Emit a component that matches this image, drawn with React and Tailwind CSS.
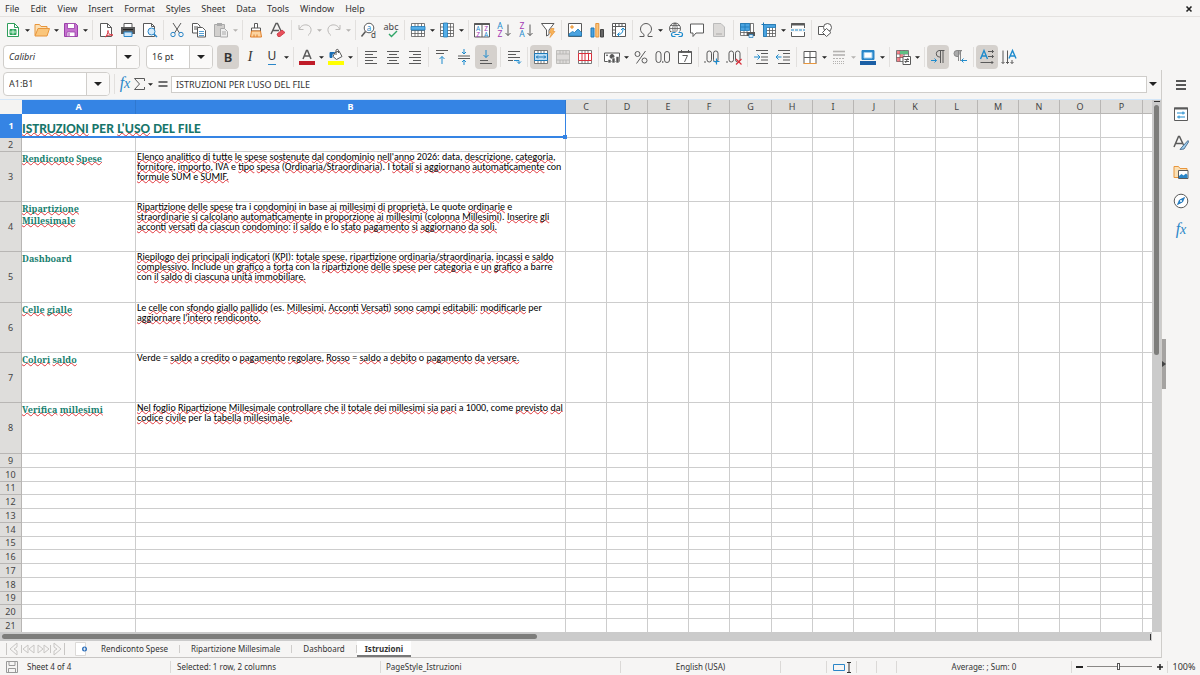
import clsx from "clsx";

const icons = {
  newDoc: (
    <>
      <path d="M2.5 1.5h7l4 4v9h-11z" stroke="#2f9e5b" fill="#fff" />
      <path d="M9.5 1.5v4h4" stroke="#2f9e5b" />
      <path d="M5 7.5h6v5H5z" fill="#43b96f" stroke="#2f9e5b" />
      <path d="M5 10h6M8 7.5v5" stroke="#fff" strokeWidth=".7" />
    </>
  ),
  open: (
    <>
      <path d="M1 13.5v-11h4.5l1.5 2h6v2" fill="#fbe0b5" stroke="#e8963c" />
      <path d="M1 14l3-7.5h11.5L13 14z" fill="#fac67c" stroke="#e8963c" />
    </>
  ),
  save: (
    <>
      <path d="M1.5 1.5h11l2 2v11h-13z" fill="#c572cf" stroke="#9a3fa8" />
      <path d="M4.5 1.5h7v5h-7z" fill="#fff" stroke="#9a3fa8" strokeWidth=".8" />
      <path d="M4 14.5V10h8v4.5z" fill="#fff" stroke="#9a3fa8" strokeWidth=".8" />
      <path d="M6 11v3" stroke="#9a3fa8" />
    </>
  ),
  pdf: (
    <>
      <path d="M2.5 1.5h7l4 4v9h-11z" fill="#fff" />
      <path d="M9.5 1.5v4h4" />
      <path d="M7 15c2-1.500 3-4 3-6.500 0 3 2 5 5 4.500-3-.5-6 .5-8 2z" stroke="#d9303c" fill="#fff" />
    </>
  ),
  print: (
    <>
      <path d="M4 5V1.500h8V5" fill="#fff" />
      <path d="M1 5h14v7H1z" fill="#5a5a5a" stroke="none" />
      <path d="M3 7.500h10" stroke="#222" />
      <path d="M4 10h8v4.500H4z" fill="#cfe6f8" stroke="#2a86c8" />
    </>
  ),
  preview: (
    <>
      <path d="M1.500 1.500h8l3 3v10h-11z" fill="#fff" />
      <path d="M9.500 1.500v3h3" />
      <circle cx="9.500" cy="9.500" r="3.500" fill="#d6ebfa" stroke="#2a86c8" />
      <path d="M12 12l3 3" stroke="#2a86c8" strokeWidth="1.500" />
    </>
  ),
  cut: (
    <>
      <path d="M4 1l6.500 10M12 1L5.500 11" />
      <circle cx="4" cy="12.500" r="2.200" stroke="#2a86c8" />
      <circle cx="12" cy="12.500" r="2.200" stroke="#2a86c8" />
    </>
  ),
  copy: (
    <>
      <path d="M1.500 1.500h5l2.500 2.500v7h-7.500zM3 5h4M3 7h4" fill="#fff" />
      <path d="M6.500 5.500h5l3 3v6.500h-8z" fill="#fff" />
      <path d="M8 9.500h5M8 11.500h5M8 13.500h5" stroke="#2a86c8" strokeWidth=".8" />
    </>
  ),
  paste: (
    <>
      <path d="M1.500 2.500h10v12h-10z" fill="#d2d0ce" stroke="#aaa" />
      <path d="M4 1h5v3H4z" fill="#aaa" stroke="none" />
      <path d="M7.500 6.500h4l3 3v5.500h-7zM9 10h4M9 12h4" fill="#eee" stroke="#aaa" />
    </>
  ),
  clone: (
    <>
      <path d="M6.500 6V1.500h3V6" fill="#fff" />
      <path d="M3.500 6h9v3h-9z" fill="#fff" />
      <path d="M3.500 9h9l1 6h-11z" fill="#fbd3a0" stroke="#e07e28" />
      <path d="M6 12.500V15M9 12.500V15" stroke="#e07e28" />
    </>
  ),
  clear: (
    <>
      <path d="M1 12L6 1.500h1.500L11 9M3 8.500h6" strokeWidth="1.400" />
      <path d="M7 12l5-4 3 2.500-5 4H8z" fill="#e8505b" stroke="#c9303c" strokeWidth=".8" />
    </>
  ),
  undo: <path d="M2 3v4.500h4.500M2.500 7C4 3.500 7 2.500 10 3c5 1 5.500 7 1 10.500" stroke="#bcbab8" />,
  redo: <path d="M14 3v4.500H9.500M13.500 7C12 3.500 9 2.500 6 3c-5 1-5.500 7-1 10.500" stroke="#bcbab8" />,
  find: (
    <>
      <circle cx="8" cy="6" r="4.800" fill="#fff" />
      <path d="M4.500 9.500L.5 14.500" strokeWidth="1.500" />
      <text x="8" y="8.500" fontSize="8" textAnchor="middle" fill="#1e8bcd" stroke="none">a</text>
      <text x="12.500" y="15.500" fontSize="8" textAnchor="middle" fill="#444" stroke="none">d</text>
    </>
  ),
  spell: (
    <>
      <text x="8" y="7.500" fontSize="9" textAnchor="middle" fill="#444" stroke="none">abc</text>
      <path d="M6 12l2.500 2.500L14 9" stroke="#2fa567" strokeWidth="1.400" />
    </>
  ),
  row: (
    <>
      <path d="M1.500 1.500h13v13h-13zM1.500 11.500h13M1.500 8.500h13M5 1.500v13M8 1.500v13M11.500 1.500v13" fill="#fff" strokeWidth=".8" />
      <path d="M1 4.500h14v3.500H1z" fill="#55aee8" stroke="#1c79b8" strokeWidth=".8" />
    </>
  ),
  column: (
    <>
      <path d="M1.500 1.500h13v13h-13zM1.500 11.500h13M1.500 8.500h13M1.500 5h13M5 1.500v13M11.500 1.500v13" fill="#fff" strokeWidth=".8" />
      <path d="M4.500 1h4v14h-4z" fill="#55aee8" stroke="#1c79b8" strokeWidth=".8" />
    </>
  ),
  sort: (
    <>
      <path d="M.500 1.500h15v13.500H.500zM8 1.500V15" fill="#fff" />
      <path d="M.500 2h15" strokeWidth="2" />
      <g stroke="none" fontSize="6.500" textAnchor="middle">
        <text x="4.200" y="8.700" fill="#1e8bcd">A</text>
        <text x="4.200" y="14.500" fill="#a33bb5">Z</text>
        <text x="12" y="8.700" fill="#a33bb5">Z</text>
        <text x="12" y="14.500" fill="#1e8bcd">A</text>
      </g>
    </>
  ),
  asc: (
    <>
      <g stroke="none" fontSize="8.500" textAnchor="middle">
        <text x="4" y="7" fill="#1e8bcd">A</text>
        <text x="4" y="15" fill="#a33bb5">Z</text>
      </g>
      <path d="M12 2.500v11M9.500 11l2.500 2.500 2.500-2.500" />
    </>
  ),
  desc: (
    <>
      <g stroke="none" fontSize="8.500" textAnchor="middle">
        <text x="4" y="7" fill="#a33bb5">Z</text>
        <text x="4" y="15" fill="#1e8bcd">A</text>
      </g>
      <path d="M12 2.500v11M9.500 11l2.500 2.500 2.500-2.500" />
    </>
  ),
  filter: (
    <>
      <path d="M1.500 1.500h12.500l-5 6.500v4.500l-2.500 1.500V8z" fill="#fff" />
      <path d="M11 6.500h3l-1 3h2l-5 6 1.500-4.500H9.500z" fill="#f9b559" stroke="#e8963c" strokeWidth=".7" />
    </>
  ),
  image: (
    <>
      <path d="M1.500 1.500h13v13h-13z" fill="#fff" />
      <circle cx="5" cy="5" r="1.300" fill="#f9b559" stroke="#e8963c" strokeWidth=".8" />
      <path d="M2 14v-2l3.500-2.500 2 1L11 7l3.500 3.500V14z" fill="#4aa3e0" stroke="#1c79b8" strokeWidth=".8" />
    </>
  ),
  chart: (
    <>
      <path d="M2 6h3v9H2z" fill="#4aa3e0" stroke="#1c79b8" />
      <path d="M6.800 1.500h3V15h-3z" fill="#fbc47a" stroke="#e8963c" />
      <path d="M11.500 7.500h3V15h-3z" fill="#666" stroke="#444" />
    </>
  ),
  pivot: (
    <>
      <path d="M1.500 1.500h13v13h-13zM1.500 4.500h13M4.500 1.500v13M8 1.500v3M11 1.500v3M1.500 8h3M1.500 11h3" fill="#fff" />
      <path d="M6.500 12.500c4 0 5.500-2 5.500-6M10 8l2-2 2 2M8.500 10.500l-2 2 2 2" stroke="#1e8bcd" />
    </>
  ),
  omega: <path d="M1.500 14.500H6v-2C3.500 11 2.500 9 2.500 7a5.500 5.500 0 0 1 11 0c0 2-1 4-3.500 5.500v2h4.500" />,
  link: (
    <>
      <circle cx="8" cy="6.500" r="5.500" fill="#fff" />
      <path d="M2.500 6.500h11M8 1v10M3.500 3.500h9M3.500 9.500h6M8 1c-3 3-3 8 0 11M8 1c3 3 3 8 0 11" strokeWidth=".8" />
      <path d="M4 9.500h12v6H4z" fill="#f6f5f4" stroke="none" />
      <path d="M8.500 10.500h-2a2 2 0 0 0 0 4h2M11.500 10.500h2a2 2 0 0 1 0 4h-2M7.500 12.500h5" stroke="#1e8bcd" strokeWidth="1.200" />
    </>
  ),
  comment: <path d="M1.500 2h13v9H7l-3 3.500V11H1.500z" fill="#fff" />,
  header: (
    <>
      <path d="M2.500 1.500h7.500l3.500 3.500v9.500h-11z" fill="#dcdad8" stroke="#bbb" />
      <path d="M5 11h6v2H5z" fill="#c4c2c0" stroke="none" />
    </>
  ),
  printArea: (
    <>
      <path d="M1.500 1.500h13v12h-13zM1.500 10.500h13M11.500 1.500v12M5 9v4.500M8 9v4.500" fill="#fff" strokeWidth=".8" />
      <path d="M1.500 1.500h9v7h-9zM1.500 5h9M6 1.500v7" fill="#4aa3e0" stroke="#1c79b8" strokeWidth=".8" />
      <path d="M8 10h8v4H8z" fill="#555" stroke="none" />
      <path d="M10 12.500h4v3h-4z" fill="#d6ebfa" stroke="#1c79b8" strokeWidth=".7" />
    </>
  ),
  freeze: (
    <>
      <path d="M2.500 2.500h12v12h-12zM5.500 8.500h9M5.500 11.500h9M8.500 5.500v9M11.500 5.500v9" fill="#fff" strokeWidth=".8" />
      <path d="M2.500 2.500h12v3h-9v9h-3z" fill="#4aa3e0" stroke="#1c79b8" strokeWidth=".8" />
      <path d="M2.500.5v4M.5 2.500h4" stroke="#1c79b8" />
    </>
  ),
  split: (
    <>
      <path d="M1.500 6V1.500h13V6M1.500 10v4.500h13V10" fill="#fff" />
      <path d="M1 2.500h14" strokeWidth="2" />
      <path d="M1 8h14" stroke="#1e8bcd" strokeDasharray="3 1" />
    </>
  ),
  shapes: (
    <>
      <path d="M1.500 4.500h8v8h-8z" fill="#fff" />
      <circle cx="10.500" cy="5.500" r="4" fill="#fff" />
      <path d="M9.500 6.500l4.500 4-4.500 4-4-4z" fill="#fff" />
    </>
  ),
  fontColor: (
    <>
      <path d="M4 10L7.500 1.500h1L12 10M5.200 7h5.600" strokeWidth="1.500" />
      <path d="M0 12h16v4H0z" fill="#c01c28" stroke="none" />
    </>
  ),
  fill: (
    <>
      <path d="M7 3.500l4-1.500 3 5.500-5.500 3L5 7.500z" fill="#fff" />
      <path d="M8 6V1.500c0-1.500 2.500-1.500 2.500 0V4" />
      <path d="M2 8.500V3.500h4.500L4 5.500v3z" stroke="#1c6fb5" fill="#1c6fb5" />
      <path d="M0 12h16v4H0z" fill="#ffff00" stroke="none" />
    </>
  ),
  left: <path d="M2 2.500h12M2 5.500h8M2 8.500h12M2 11.500h8M2 14.500h12" />,
  center: <path d="M2 2.500h12M4 5.500h8M2 8.500h12M4 11.500h8M2 14.500h12" />,
  right: <path d="M2 2.500h12M6 5.500h8M2 8.500h12M6 11.500h8M2 14.500h12" />,
  top: (
    <>
      <path d="M2 1.500h12M2 4.500h8" />
      <path d="M8 15V7.500M5.500 10L8 7.500l2.500 2.500" stroke="#1e8bcd" />
    </>
  ),
  middle: (
    <>
      <path d="M2 7h12M2 9.500h12" />
      <path d="M8 0v5M6 3l2 2 2-2M8 16v-5M6 13l2-2 2 2" stroke="#1e8bcd" />
    </>
  ),
  bottom: (
    <>
      <path d="M2 11.500h8M2 14.500h12" />
      <path d="M8 1v7.500M5.500 6L8 8.500 10.500 6" stroke="#1e8bcd" />
    </>
  ),
  wrap: (
    <>
      <path d="M2 2.500h12M2 5.500h8M2 8.500h12M2 11.500h5" />
      <path d="M8 11.500h5v3M11 12.500l2 2 2-2" stroke="#1e8bcd" />
    </>
  ),
  merge: (
    <>
      <path d="M1.500 1.500h13v13h-13zM1.500 4.500h13M1.500 11.500h13M5 1.500v3M8 1.500v3M11 1.500v3M5 11.500v3M8 11.500v3M11 11.500v3" fill="#fff" strokeWidth=".8" />
      <path d="M1.500 4.500h13v7h-13z" fill="#b9dcf5" stroke="#1c79b8" />
      <path d="M3 8h10M5 6.500L3.500 8 5 9.500M11 6.500L12.500 8 11 9.500" stroke="#1c79b8" />
    </>
  ),
  mergeOff: (
    <path d="M1.500 1.500h13v13h-13zM1.500 5h13M1.500 11h13M5 1.500V5M8 1.500V5M11 1.500V5M5 11v3.500M8 11v3.500M11 11v3.500" fill="#dddbd9" stroke="#b4b2b0" strokeWidth=".8" />
  ),
  unmerge: (
    <>
      <path d="M1.500 1.500h13v13h-13zM5 1.500v3M8 1.500v3M11 1.500v3M5 11.500v3M8 11.500v3M11 11.500v3" fill="#fff" strokeWidth=".8" />
      <path d="M1.500 4.500h13v7h-13zM5 4.500v7M8 4.500v7M11.500 4.500v7" fill="#fff" stroke="#d9303c" />
    </>
  ),
  currency: (
    <>
      <path d="M.500 4h15v8.500H.500z" fill="#fff" />
      <circle cx="8" cy="7.500" r="2" fill="#555" />
      <circle cx="3" cy="6.300" r=".5" fill="#555" />
      <path d="M4 12.500v-2h3v3.500H4zM8 14V9h3v5zM12 14V7.500h3V14z" fill="#555" stroke="#fff" strokeWidth=".6" />
    </>
  ),
  percent: (
    <>
      <circle cx="4.500" cy="5" r="2.500" />
      <circle cx="11.500" cy="11.500" r="2.500" />
      <path d="M12.500 2L3.500 14.500" />
    </>
  ),
  number: (
    <>
      <rect x="1" y="2.500" width="5" height="11" rx="2.500" />
      <rect x="9.500" y="2.500" width="5" height="11" rx="2.500" />
      <path d="M7.800 12v2" />
    </>
  ),
  date: (
    <>
      <path d="M1.500 2.500h13v12h-13zM4.500 1v3M11.500 1v3" fill="#fff" />
      <path d="M1.500 3h13" strokeWidth="1.800" />
      <path d="M5.500 6.500h5L7.500 13" />
    </>
  ),
  addDec: (
    <>
      <rect x="3" y="2" width="4.500" height="11" rx="2.200" />
      <rect x="9.500" y="2" width="4.500" height="11" rx="2.200" />
      <path d="M1 12v2" />
      <path d="M12.500 9.500v6M9.500 12.500h6" stroke="#1e8bcd" strokeWidth="1.200" />
    </>
  ),
  delDec: (
    <>
      <rect x="3" y="2" width="4.500" height="11" rx="2.200" />
      <rect x="9.500" y="2" width="4.500" height="11" rx="2.200" />
      <path d="M1 12v2" />
      <path d="M10 10l5.500 5.500M15.500 10L10 15.500" stroke="#d9303c" strokeWidth="1.200" />
    </>
  ),
  indent: (
    <>
      <path d="M3 1.500h12M8 4.500h7M8 8h7M8 11h7M3 14.500h12" />
      <path d="M1 8h5.500M4.500 5.500L7 8l-2.500 2.500" stroke="#1e8bcd" />
    </>
  ),
  outdent: (
    <>
      <path d="M3 1.500h12M8 4.500h7M8 8h7M8 11h7M3 14.500h12" />
      <path d="M6.500 8H1M3.500 5.500L1 8l2.500 2.500" stroke="#1e8bcd" />
    </>
  ),
  border: (
    <>
      <path d="M2 14.500v-12h12v12M8 2.500v12M2 8.500h12" fill="#fff" />
      <path d="M1.500 14.500h13" stroke="#e8963c" />
    </>
  ),
  lineStyle: (
    <>
      <path d="M2 2.500h12" stroke="#b4b2b0" strokeWidth="1.600" />
      <path d="M2 6h12" stroke="#b4b2b0" strokeWidth="1.600" />
      <path d="M2 9.500h12" stroke="#b4b2b0" strokeDasharray="2 1" />
      <path d="M2 12.500h12M2 14.500h12" stroke="#b4b2b0" strokeDasharray="1 1" />
    </>
  ),
  lineColor: (
    <>
      <path d="M2 1.500h12v9H2z" fill="#2a86c8" stroke="#2a86c8" />
      <path d="M4 3.500h8v5.500H4z" fill="#fff" stroke="#9ccdef" />
      <path d="M0 12h16v4H0z" fill="#1b5fa5" stroke="none" />
    </>
  ),
  conditional: (
    <>
      <path d="M1.500 1.500h12v11h-12zM1.500 5h12M1.500 8.500h12M5 1.500v11M9 1.500v11" fill="#fff" strokeWidth=".8" />
      <path d="M2 2h3v3H2zM5 5.500h3v3H5zM2 8.500h3v4H2z" fill="#e8505b" fillOpacity=".7" stroke="none" />
      <path d="M5 2h8v3H5z" fill="#5fbf83" stroke="none" />
      <path d="M8 7.500h7.500v8H8z" fill="#fff" />
      <path d="M9.500 10.500h4.500M9.500 12.500h4.500M13 9l-2.500 5" />
    </>
  ),
  ltr: (
    <>
      <path d="M14.500 1.500H9a3.300 3.300 0 0 0 0 6.500h1.500M10.500 1.500V14M13 1.500V14" />
      <path d="M1 11.500h5.500M4.500 9.500l2 2-2 2" stroke="#1e8bcd" />
    </>
  ),
  rtl: (
    <>
      <path d="M10 1.500H5a3 3 0 0 0 0 6h1.500M6.500 1.500V12M8.500 1.500V12" fill="#aaa" stroke="#888" />
      <path d="M15 11.500H9.500M11.500 9.500l-2 2 2 2" stroke="#1e8bcd" />
    </>
  ),
  textLtr: (
    <>
      <path d="M1.500 10L5 1.500 8.500 10M2.700 7h4.600" stroke="#1e8bcd" strokeWidth="1.400" />
      <path d="M9 2.500h5.500M9 7.500h5.500M1.500 13.500H14M13 1l1.500 1.500L13 4M13 6l1.500 1.500L13 9M12.500 12l1.500 1.500-1.500 1.500" />
    </>
  ),
  textTtb: (
    <>
      <path d="M8 9.500l3.500-8 3.500 8M9.200 7h4.600" stroke="#1e8bcd" strokeWidth="1.400" />
      <path d="M2 1.500v13M6.500 1.500v13M11 11v3.500M.5 13L2 14.500 3.500 13M5 13l1.500 1.500L8 13M9.500 13l1.500 1.500 1.500-1.500" />
    </>
  ),
  sigma: <path d="M13 4V1.500H3L8.500 8 3 14.500h10V12" />,
  equals: <path d="M3.500 6h9M3.500 10h9" stroke="#444" strokeWidth="1.400" />,
  menu: <path d="M3 4h10M3 8h10M3 12h10" stroke="#222" strokeWidth="1.500" />,
  properties: (
    <>
      <path d="M1.500 2h13v12.500h-13z" fill="#fff" />
      <path d="M1 2.500h14" strokeWidth="2" />
      <path d="M4 7h8M4 11h8M10 5.500v3M6 9.500v3" stroke="#1e8bcd" />
    </>
  ),
  styles: (
    <>
      <path d="M1 12L5.500 1.500h1L10.500 10M2.700 8.500H9" strokeWidth="1.500" />
      <path d="M15 5.500L9 12l-2 2.500 4-.5 4.500-7z" fill="#9ccdef" stroke="#44688a" strokeWidth=".9" />
    </>
  ),
  gallery: (
    <>
      <path d="M1 13.500v-11h4.500l1.500 2h7v9z" fill="#fbe0b5" stroke="#e8963c" />
      <path d="M5.500 6.500h9.500v8H5.500z" fill="#fff" />
      <path d="M6 14v-2l2.500-2 2 1.500L13 9.500l1.500 1.500v3z" fill="#2a86c8" stroke="none" />
    </>
  ),
  navigator: (
    <>
      <circle cx="8" cy="8" r="6.800" fill="#fff" />
      <path d="M11.500 4.500L9.500 9l-5 2.500 2-4.500z" fill="#2a86c8" stroke="#1c6fb5" strokeWidth=".8" />
      <circle cx="8" cy="8" r="1" fill="#fff" stroke="none" />
    </>
  ),
  docSaved: (
    <path d="M2.500 2.500h11v11h-11zM5 2.500v4h6v-4M4.500 13.500v-4h7v4" stroke="#999" />
  ),
};

function Icon({ name }) {
  return (
    <svg viewBox="0 0 16 16" fill="none" stroke="#5a5a5a" className="size-4 shrink-0 overflow-visible" aria-hidden="true">
      {icons[name]}
    </svg>
  );
}

function Caret({ dim, big }) {
  return (
    <svg viewBox="0 0 8 4" className={clsx("shrink-0", big ? "h-1 w-2" : "h-[3px] w-[5px]")} aria-hidden="true">
      <path d="M0 0h8L4 4z" fill={dim ? "#b5b3b1" : "#222"} />
    </svg>
  );
}

function Fx() {
  return (
    <span className="font-['Liberation_Serif',serif] text-base leading-4 text-[#2a86c8] italic">
      f<span className="text-sm">x</span>
    </span>
  );
}

const standardBar = [
  ["newDoc", "New", { menu: true }],
  ["open", "Open", { menu: true }],
  ["save", "Save", { menu: true }],
  "||",
  ["pdf", "Export as PDF"],
  ["print", "Print"],
  ["preview", "Print Preview"],
  "|",
  ["cut", "Cut"],
  ["copy", "Copy"],
  ["paste", "Paste", { menu: true, dim: true }],
  "||",
  ["clone", "Clone Formatting"],
  ["clear", "Clear Direct Formatting"],
  "|",
  ["undo", "Undo", { menu: true, dim: true }],
  ["redo", "Redo", { menu: true, dim: true }],
  "||",
  ["find", "Find and Replace"],
  ["spell", "Spelling"],
  "|",
  ["row", "Row", { menu: true }],
  ["column", "Column", { menu: true }],
  "||",
  ["sort", "Sort"],
  ["asc", "Sort Ascending"],
  ["desc", "Sort Descending"],
  ["filter", "AutoFilter"],
  "|",
  ["image", "Insert Image"],
  ["chart", "Insert Chart"],
  ["pivot", "Insert Pivot Table"],
  "|",
  ["omega", "Special Character", { menu: true }],
  ["link", "Insert Hyperlink"],
  ["comment", "Insert Comment"],
  ["header", "Headers and Footers"],
  "||",
  ["printArea", "Define Print Area"],
  ["freeze", "Freeze Rows and Columns", { menu: true }],
  ["split", "Split Window"],
  "|",
  ["shapes", "Show Draw Functions"],
];

const formattingBar = [
  "||",
  ["fontColor", "Font Color", { menu: true }],
  ["fill", "Background Color", { menu: true }],
  "||",
  ["left", "Align Left"],
  ["center", "Center Horizontally"],
  ["right", "Align Right"],
  "|",
  ["top", "Align Top"],
  ["middle", "Center Vertically"],
  ["bottom", "Align Bottom", { active: true }],
  "||",
  ["wrap", "Wrap Text"],
  "|",
  ["merge", "Merge and Center", { active: true }],
  ["mergeOff", "Merge Cells"],
  ["unmerge", "Unmerge Cells"],
  "|",
  ["currency", "Currency", { menu: true }],
  ["percent", "Percent"],
  ["number", "Number"],
  ["date", "Date"],
  "|",
  ["addDec", "Add Decimal Place"],
  ["delDec", "Delete Decimal Place"],
  "|",
  ["indent", "Increase Indent"],
  ["outdent", "Decrease Indent"],
  "|",
  ["border", "Borders", { menu: true }],
  ["lineStyle", "Border Style", { menu: true, dim: true }],
  ["lineColor", "Border Color", { menu: true }],
  "||",
  ["conditional", "Conditional", { menu: true }],
  "||",
  ["ltr", "Left-To-Right", { active: true }],
  ["rtl", "Right-To-Left"],
  "|",
  ["textLtr", "Text direction left to right", { active: true }],
  ["textTtb", "Text direction top to bottom"],
];

function ToolButton({ label, active, children }) {
  return (
    <button
      type="button"
      aria-label={label}
      className={clsx("flex h-6 w-[22px] shrink-0 items-center justify-center rounded", active && "bg-[#d5d1cd]")}
    >
      {children}
    </button>
  );
}

function MenuArrow({ label, dim }) {
  return (
    <button type="button" aria-label={label} className="flex h-6 w-[7px] shrink-0 items-center justify-center pt-px">
      <Caret dim={dim} />
    </button>
  );
}

function ToolItems({ items }) {
  return items.map((item, i) => {
    if (typeof item === "string") {
      return (
        <div key={i} className={clsx("flex h-5 shrink-0 justify-center", item === "||" ? "w-1.5" : "w-[5px]")}>
          <div className="w-px bg-[#e2e0de]" />
        </div>
      );
    }
    const [icon, label, opts = {}] = item;
    return (
      <div key={i} className="flex shrink-0">
        <ToolButton label={label} active={opts.active}>
          <Icon name={icon} />
        </ToolButton>
        {opts.menu && <MenuArrow label={`${label} options`} dim={opts.dim} />}
      </div>
    );
  });
}

function ComboBox({ label, value, className, inputClass }) {
  return (
    <div className={clsx("flex h-6 shrink-0 overflow-hidden rounded border border-[#d0cecb] bg-white", className)}>
      <input aria-label={label} defaultValue={value} className={clsx("min-w-0 flex-1 px-[5px] outline-none", inputClass)} />
      <button
        type="button"
        aria-label={`${label} list`}
        className="flex w-[23px] items-center justify-center border-l border-[#d0cecb] bg-[#faf9f8]"
      >
        <Caret big />
      </button>
    </div>
  );
}

const menus = ["File", "Edit", "View", "Insert", "Format", "Styles", "Sheet", "Data", "Tools", "Window", "Help"];

function MenuBar() {
  return (
    <nav className="flex h-[17px] shrink-0 items-center gap-[11px] border-b border-[#e4e2e0] pt-0.5 pr-1.5 pl-[5px]">
      {menus.map(m => (
        <button key={m} type="button">{m}</button>
      ))}
      <button type="button" aria-label="Close document" className="ml-auto">
        <svg viewBox="0 0 8 8" className="mr-px size-2" stroke="#222" strokeWidth="1.600">
          <path d="M1.500 1.500l5 5M6.500 1.500l-5 5" />
        </svg>
      </button>
    </nav>
  );
}

function FormulaBar() {
  return (
    <div className="flex h-[29px] shrink-0 items-center pr-1 pb-px pl-[3px]">
      <ComboBox label="Name Box" value="A1:B1" className="w-[107px]" />
      <div className="ml-1 h-5 w-px bg-[#e2e0de]" />
      <button type="button" aria-label="Function Wizard" className="ml-0.5 w-4"><Fx /></button>
      <button type="button" aria-label="Select Function" className="w-3.5">
        <svg viewBox="0 0 14 16" fill="none" stroke="#5a5a5a" className="h-4 w-3.5" aria-hidden="true">
          <path d="M11.500 5V2.500H1.500L6.500 8l-5 5.500h10V11" />
        </svg>
      </button>
      <MenuArrow label="Select Function options" />
      <button type="button" aria-label="Formula" className="ml-px"><Icon name="equals" /></button>
      <input
        aria-label="Input line"
        defaultValue="ISTRUZIONI PER L'USO DEL FILE"
        className="h-[17px] min-w-0 flex-1 border border-[#cfcdca] bg-white px-1 outline-none"
      />
      <button type="button" aria-label="Expand Formula Bar" className="pl-0.5"><Caret big /></button>
    </div>
  );
}

// words the English dictionary accepts
const known = new Set([
  "PER", "DEL", "FILE", "data", "IVA", "e", "I", "con", "SUM", "tra", "i", "in", "base", "Le", "quote", "lo", "Include",
  "a", "la", "per", "barre", "Verde", "=", "o", "come", "es.",
]);

function Spelled({ text }) {
  return text.split(" ").map((word, i) => {
    const [, open, core, close] = word.match(/^(\(?)(.*?)([,:)]*\.?)$/);
    const stop = close === "." ? "." : "";
    const ok = known.has(core) || known.has(core + stop) || /^\d+$/.test(core);
    return (
      <span key={i}>
        {i > 0 && " "}
        {open}
        {ok ? core + stop : (
          <span className="underline decoration-[#e0393e] decoration-wavy decoration-1 underline-offset-[-1px] [text-decoration-skip-ink:none]">
            {core + stop}
          </span>
        )}
        {stop ? "" : close}
      </span>
    );
  });
}

const rows = [
  {
    h: "h-[50px]",
    name: ["Rendiconto Spese"],
    text: [
      "Elenco analitico di tutte le spese sostenute dal condominio nell'anno 2026: data, descrizione, categoria,",
      "fornitore, importo, IVA e tipo spesa (Ordinaria/Straordinaria). I totali si aggiornano automaticamente con",
      "formule SUM e SUMIF.",
    ],
  },
  {
    h: "h-[50px]",
    name: ["Ripartizione", "Millesimale"],
    text: [
      "Ripartizione delle spese tra i condomini in base ai millesimi di proprietà. Le quote ordinarie e",
      "straordinarie si calcolano automaticamente in proporzione ai millesimi (colonna Millesimi). Inserire gli",
      "acconti versati da ciascun condomino: il saldo e lo stato pagamento si aggiornano da soli.",
    ],
  },
  {
    h: "h-[51px]",
    name: ["Dashboard"],
    text: [
      "Riepilogo dei principali indicatori (KPI): totale spese, ripartizione ordinaria/straordinaria, incassi e saldo",
      "complessivo. Include un grafico a torta con la ripartizione delle spese per categoria e un grafico a barre",
      "con il saldo di ciascuna unità immobiliare.",
    ],
  },
  {
    h: "h-[50px]",
    name: ["Celle gialle"],
    text: [
      "Le celle con sfondo giallo pallido (es. Millesimi, Acconti Versati) sono campi editabili: modificarle per",
      "aggiornare l'intero rendiconto.",
    ],
  },
  {
    h: "h-[50px]",
    name: ["Colori saldo"],
    text: ["Verde = saldo a credito o pagamento regolare, Rosso = saldo a debito o pagamento da versare."],
  },
  {
    h: "h-[51px]",
    name: ["Verifica millesimi"],
    text: [
      "Nel foglio Ripartizione Millesimale controllare che il totale dei millesimi sia pari a 1000, come previsto dal",
      "codice civile per la tabella millesimale.",
    ],
  },
];

const letters = "CDEFGHIJKLMNOP".split("");
const wide = ["G", "L", "P"];
const emptyRows = [9, 10, 11, 12, 13, 14, 15, 16, 17, 18, 19, 20, 21];
const shortRows = [11, 15, 19];

const cell = "border-r border-b border-[#cdcdcd] p-0";
const rowHead = "border-r border-b border-[#b8b6b4] bg-[#dedddb] p-0 text-center font-normal leading-3 text-[#444]";

function EmptyCells() {
  return (
    <>
      {letters.map(l => <td key={l} className={cell} />)}
      <td className="border-b border-[#cdcdcd] p-0" />
    </>
  );
}

function Grid() {
  return (
    <table className="w-full table-fixed border-separate border-spacing-0">
      <colgroup>
        <col className="w-[22px]" />
        <col className="w-[114px]" />
        <col className="w-[430px]" />
        {letters.map(l => <col key={l} className={wide.includes(l) ? "w-[42px]" : "w-[41px]"} />)}
        <col />
      </colgroup>
      <thead>
        <tr className="h-[14px] leading-3 text-[#444]">
          <th className="bg-[#f4f3f2] p-0" />
          {["A", "B"].map(l => (
            <th key={l} scope="col" className="border-r border-[#2f78d0] bg-[#3584e4] p-0 text-white">{l}</th>
          ))}
          {letters.map(l => (
            <th key={l} scope="col" className="border-r border-b border-[#b8b6b4] bg-[#dedddb] p-0 font-normal">{l}</th>
          ))}
          <th className="border-b border-[#b8b6b4] bg-[#dedddb] p-0" />
        </tr>
      </thead>
      <tbody>
        <tr className="h-6">
          <th scope="row" className="bg-[#3584e4] p-0 leading-3 text-white">1</th>
          <td colSpan={2} className="relative p-0 align-bottom">
            <div className="font-['Carlito','Lato',sans-serif] text-sm leading-[18px] font-bold whitespace-nowrap text-[#17756a]">
              <Spelled text="ISTRUZIONI PER L'USO DEL FILE" />
            </div>
            <div className="absolute inset-0 border-r border-b-2 border-[#3584e4]" />
            <div className="absolute -right-px -bottom-px size-1 bg-[#3584e4]" />
          </td>
          <EmptyCells />
        </tr>
        <tr className="h-[14px]">
          <th scope="row" className={rowHead}>2</th>
          <td className={cell} />
          <td className={cell} />
          <EmptyCells />
        </tr>
        {rows.map((row, i) => (
          <tr key={i} className={row.h}>
            <th scope="row" className={rowHead}>{i + 3}</th>
            <td className={clsx(cell, "pt-px align-top font-['Noto_Serif','DejaVu_Serif',serif] text-[9px] leading-3 font-bold text-[#17806f]")}>
              {row.name.map(line => <div key={line}>{line === "Dashboard" ? line : <Spelled text={line} />}</div>)}
            </td>
            <td className={clsx(cell, "pl-px align-top font-['Carlito','Lato',sans-serif] text-[10px] leading-[10px] whitespace-nowrap text-black")}>
              {row.text.map(line => <div key={line}><Spelled text={line} /></div>)}
            </td>
            <EmptyCells />
          </tr>
        ))}
        {emptyRows.map(n => (
          <tr key={n} className={shortRows.includes(n) ? "h-[13px]" : "h-[14px]"}>
            <th scope="row" className={rowHead}>{n}</th>
            <td className={cell} />
            <td className={cell} />
            <EmptyCells />
          </tr>
        ))}
      </tbody>
    </table>
  );
}

const tabs = ["Rendiconto Spese", "Ripartizione Millesimale", "Dashboard", "Istruzioni"];

function SheetTabs() {
  return (
    <div className="flex h-[17px] shrink-0 items-center border-b border-[#c8c6c4] pl-1">
      <svg viewBox="0 0 64 14" className="h-[14px] w-16" fill="none" stroke="#c8c6c4" aria-hidden="true">
        <path d="M2.500 1v12M13 1L6 7l7 6V9l-3-2 3-2zM17.500 3v8M24 3l-5 4 5 4zM30 3l-5 4 5 4zM34 3l5 4-5 4zM40 3l5 4-5 4zM46.500 3v8M50 1l7 6-7 6V9l3-2-3-2zM60.500 1v12" />
      </svg>
      <button type="button" aria-label="Add Sheet" className="ml-1.5 w-4">
        <svg viewBox="0 0 16 14" className="h-[14px] w-4" aria-hidden="true">
          <path d="M1.500 .5h10v13h-10z" fill="#fff" stroke="#dcdad8" />
          <circle cx="10.500" cy="7" r="2.500" fill="#2d6fba" />
          <path d="M10.500 5.500v3M9 7h3" stroke="#fff" strokeWidth=".8" />
        </svg>
      </button>
      <div role="tablist" className="flex h-full items-center text-[8px]">
        {tabs.map((t, i) => {
          const current = t === "Istruzioni";
          return (
            <div key={t} className="flex h-full items-center">
              {i > 0 && <div className="h-2 w-px bg-[#cfcdcb]" />}
              <button
                type="button"
                role="tab"
                aria-selected={current}
                className={clsx(
                  "flex h-full items-center",
                  current ? "border-b-2 border-[#777] bg-white px-2 pt-0.5 font-bold" : "px-[11px]",
                )}
              >
                {t}
              </button>
            </div>
          );
        })}
      </div>
    </div>
  );
}

function Divider() {
  return <div className="h-3 w-px shrink-0 bg-[#dbd9d7]" />;
}

function StatusBar() {
  return (
    <footer className="flex h-[17px] shrink-0 items-center pl-1 text-[8px]">
      <Icon name="docSaved" />
      <span className="w-[150px] pl-[7px]">Sheet 4 of 4</span>
      <Divider />
      <span className="w-[209px] pl-1.5">Selected: 1 row, 2 columns</span>
      <Divider />
      <span className="w-[239px] pl-[5px]">PageStyle_Istruzioni</span>
      <Divider />
      <span className="flex-1 text-center">English (USA)</span>
      <Divider />
      <span className="w-[45px]" />
      <Divider />
      <span className="flex w-[29px] items-center justify-center">
        <svg viewBox="0 0 20 12" className="h-3 w-5" fill="none" aria-hidden="true">
          <path d="M1.500 3.500h11v6h-11z" stroke="#2a86c8" />
          <path d="M15 1.500h4M15 11.500h4M17 1.500v10" stroke="#333" />
        </svg>
      </span>
      <Divider />
      <span className="w-[19px]" />
      <Divider />
      <span className="w-[19px]" />
      <Divider />
      <span className="w-[174px] text-center">Average: ; Sum: 0</span>
      <Divider />
      <div className="flex w-[95px] items-center justify-center gap-1 text-[#222]">
        <button type="button" aria-label="Zoom Out" className="h-0.5 w-[7px] bg-[#222]" />
        <input
          type="range"
          aria-label="Zoom"
          min="0"
          max="200"
          defaultValue="98"
          className="h-px w-[65px] appearance-none bg-[#8a8886] [&::-webkit-slider-thumb]:h-[7px] [&::-webkit-slider-thumb]:w-[3px] [&::-webkit-slider-thumb]:appearance-none [&::-webkit-slider-thumb]:border [&::-webkit-slider-thumb]:border-[#555] [&::-webkit-slider-thumb]:bg-white"
        />
        <button type="button" aria-label="Zoom In">
          <svg viewBox="0 0 8 8" className="size-2" stroke="#222" strokeWidth="1.500">
            <path d="M4 1v6M1 4h6" />
          </svg>
        </button>
      </div>
      <Divider />
      <span className="w-8 text-center text-[9px]">100%</span>
    </footer>
  );
}

const panels = [
  ["menu", "Sidebar Settings"],
  ["properties", "Properties"],
  ["styles", "Styles"],
  ["gallery", "Gallery"],
  ["navigator", "Navigator"],
];

function Sidebar() {
  return (
    <aside className="relative flex w-[39px] shrink-0 flex-col items-center gap-[5px] border-l border-[#cfcdca] pt-[3px]">
      {panels.map(([icon, label]) => (
        <ToolButton key={icon} label={label}><Icon name={icon} /></ToolButton>
      ))}
      <ToolButton label="Functions"><Fx /></ToolButton>
      <div className="absolute top-[269px] left-0 flex h-[50px] w-1 items-center bg-[#a5a3a1]">
        <svg viewBox="0 0 4 6" className="h-1.5 w-1"><path d="M0 0l4 3-4 3z" fill="#444" /></svg>
      </div>
    </aside>
  );
}

export default function App() {
  return (
    <div className="flex h-screen flex-col overflow-hidden bg-[#f6f5f4] font-['Noto_Sans',sans-serif] text-[9px] leading-3 text-[#333]">
      <MenuBar />
      <div role="toolbar" aria-label="Standard" className="flex h-[26px] shrink-0 items-center pl-0.5">
        <ToolItems items={standardBar} />
      </div>
      <div role="toolbar" aria-label="Formatting" className="flex h-[27px] shrink-0 items-center pl-[3px]">
        <ComboBox label="Font Name" value="Calibri" className="w-[137px]" inputClass="italic" />
        <ComboBox label="Font Size" value="16 pt" className="mr-1 ml-1.5 w-[67px]" />
        <ToolButton label="Bold" active><span className="text-[13px] font-semibold">B</span></ToolButton>
        <ToolButton label="Italic"><span className="font-['Liberation_Serif',serif] text-sm italic">I</span></ToolButton>
        <ToolButton label="Underline">
          <span className="border-b border-[#2a86c8] text-xs">U</span>
        </ToolButton>
        <MenuArrow label="Underline options" />
        <ToolItems items={formattingBar} />
      </div>
      <div className="flex min-h-0 flex-1">
        <main className="flex min-w-0 flex-1 flex-col">
          <FormulaBar />
          <div className="h-px shrink-0 bg-[#d3e6f8]" />
          <div className="flex min-h-0 flex-1">
            <div className="min-w-0 flex-1 overflow-hidden bg-white"><Grid /></div>
            <div className="flex w-[9px] shrink-0 flex-col items-center gap-[3px] bg-[#cbcbcb] pt-px">
              <div className="h-px w-1.5 shrink-0 bg-[#333]" />
              <div className="h-[47%] w-[5px] rounded-full bg-[#7d7d7b]" />
            </div>
          </div>
          <div className="mr-[9px] flex h-[9px] shrink-0 items-center bg-[#cbcbcb] pl-0.5">
            <div className="h-[5px] w-[46.500%] rounded-full bg-[#7d7d7b]" />
            <div className="mr-px ml-auto h-1.5 w-px bg-[#333]" />
          </div>
          <SheetTabs />
        </main>
        <Sidebar />
      </div>
      <StatusBar />
    </div>
  );
}
